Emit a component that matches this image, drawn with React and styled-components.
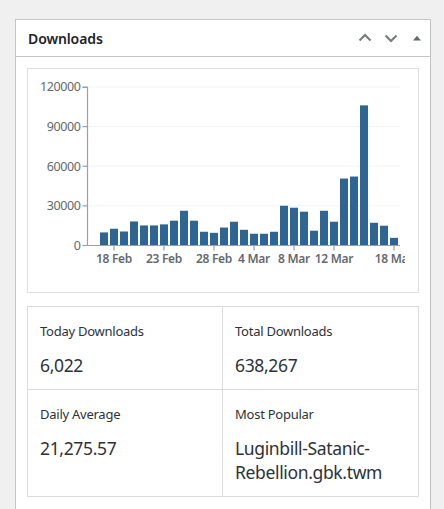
import React from "react";
import styled, { createGlobalStyle } from "styled-components";

const Global = createGlobalStyle`
  html, body { margin: 0; padding: 0; background: #f0f0f1; }
  body { font-family: "Noto Sans", "Open Sans", sans-serif; color: #1d2327; }
`;

const Page = styled.div`
  padding: 19px 13px 0 15px;
  height: 509px;
  box-sizing: border-box;
  overflow: hidden;
`;

const Panel = styled.section`
  background: #fff;
  border: 1px solid #c3c4c7;
  width: 416px;
  box-sizing: border-box;
  min-height: 520px;
`;

const Header = styled.header`
  display: flex;
  align-items: center;
  justify-content: space-between;
  height: 36px;
  padding: 0 0 0 12px;
  border-bottom: 1px solid #c3c4c7;
`;

const Title = styled.h2`
  margin: 0;
  font-size: 14px;
  font-weight: 600;
  color: #1d2327;
  letter-spacing: -0.1px;
`;

const Controls = styled.div`
  display: flex;
  align-items: center;
`;

const IconButton = styled.button`
  width: 26px;
  height: 36px;
  border: 0;
  background: none;
  padding: 0;
  display: flex;
  align-items: center;
  justify-content: center;
  color: ${(p) => p.$color || "#787c82"};
`;

const Body = styled.div`
  padding: 11px 11px 12px 11px;
  display: flex;
  flex-direction: column;
  gap: 13px;
`;

const ChartBox = styled.div`
  border: 1px solid #e0e0e0;
  height: 225px;
  box-sizing: border-box;
`;

const Stats = styled.div`
  display: grid;
  grid-template-columns: 195px 1fr;
  border: 1px solid #dcdcde;
`;

const Cell = styled.div`
  padding: 14px 13px 12px 12px;
  border-right: ${(p) => (p.$right ? "0" : "1px solid #dcdcde")};
  border-bottom: ${(p) => (p.$last ? "0" : "1px solid #dcdcde")};
`;

const Label = styled.div`
  font-size: 13px;
  line-height: 20px;
  color: #2c3338;
  letter-spacing: -0.25px;
`;

const Value = styled.div`
  margin-top: 12px;
  font-size: 17.5px;
  line-height: 24px;
  color: #2c3338;
  letter-spacing: -0.35px;
`;

const data = [
  9900, 12700, 10600, 18200, 15200, 15200, 16000, 18800, 26300, 18800,
  10400, 9600, 13600, 18000, 11900, 8900, 8900, 10400, 30100, 28600,
  25600, 11200, 26300, 18000, 50700, 52200, 106100, 17200, 15000, 5800,
];

const xTicks = [
  { i: 1, t: "18 Feb" },
  { i: 6, t: "23 Feb" },
  { i: 11, t: "28 Feb" },
  { i: 15, t: "4 Mar" },
  { i: 19, t: "8 Mar" },
  { i: 23, t: "12 Mar" },
  { i: 29, t: "18 Mar" },
];

function Chart() {
  const ax = 59.5;
  const base = 176.5;
  const top = 18;
  const scale = (base - top) / 120000;
  const yTicks = [0, 30000, 60000, 90000, 120000];
  const x0 = 72;
  return (
    <svg width="377" height="223" style={{ display: "block", overflow: "hidden" }}>
      {yTicks.slice(1).map((v) => (
        <line key={v} x1={ax} x2={372} y1={base - v * scale} y2={base - v * scale} stroke="#f3f3f3" strokeWidth="1" />
      ))}
      {data.map((v, i) => {
        const h = v * scale;
        return <rect key={i} x={x0 + i * 10} y={base - h} width="8" height={h} fill="#2e6592" />;
      })}
      <path d={`M${ax - 5},${top + 0.5}H${ax}V${base}H372`} fill="none" stroke="#a0a0a0" strokeWidth="1.2" />
      {yTicks.map((v) => (
        <g key={v}>
          <line x1={ax - 5} x2={ax} y1={base - v * scale} y2={base - v * scale} stroke="#a0a0a0" strokeWidth="1.2" />
          <text x={ax - 7} y={base - v * scale} dy="0.35em" textAnchor="end" fontSize="12.5" fill="#646970" fontFamily="'Noto Sans', sans-serif" letterSpacing="-0.4">
            {v}
          </text>
        </g>
      ))}
      {xTicks.map(({ i, t }) => {
        const cx = x0 + i * 10 + 4;
        return (
          <g key={t}>
            <line x1={cx} x2={cx} y1={base} y2={base + 5} stroke="#a0a0a0" strokeWidth="1.2" />
            <text x={cx} y={base + 13} dy="0.35em" textAnchor="middle" fontSize="12" fontWeight="600" fill="#646970" fontFamily="'Noto Sans', sans-serif" letterSpacing="-0.3">
              {t}
            </text>
          </g>
        );
      })}
    </svg>
  );
}

const stats = [
  { label: "Today Downloads", value: "6,022" },
  { label: "Total Downloads", value: "638,267" },
  { label: "Daily Average", value: "21,275.57" },
  { label: "Most Popular", value: "Luginbill-Satanic-Rebellion.gbk.twm" },
];

export default function App() {
  return (
    <>
      <Global />
      <Page>
        <Panel>
          <Header>
            <Title>Downloads</Title>
            <Controls>
              <IconButton aria-label="Move up">
                <svg width="14" height="10" viewBox="0 0 14 10">
                  <path d="M1.5 7.5 L7 2 L12.5 7.5" fill="none" stroke="currentColor" strokeWidth="2.2" />
                </svg>
              </IconButton>
              <IconButton aria-label="Move down">
                <svg width="14" height="10" viewBox="0 0 14 10">
                  <path d="M1.5 2.5 L7 8 L12.5 2.5" fill="none" stroke="currentColor" strokeWidth="2.2" />
                </svg>
              </IconButton>
              <IconButton aria-label="Toggle" $color="#646970">
                <svg width="10" height="6" viewBox="0 0 10 6">
                  <path d="M1 5.5 L5 0.8 L9 5.5 Z" fill="currentColor" />
                </svg>
              </IconButton>
            </Controls>
          </Header>
          <Body>
            <ChartBox>
              <Chart />
            </ChartBox>
            <Stats>
              {stats.map((s, i) => (
                <Cell key={s.label} $right={i % 2 === 1} $last={i >= 2}>
                  <Label>{s.label}</Label>
                  <Value>
                    {s.label === "Most Popular" ? (
                      <>
                        Luginbill-Satanic-
                        <br />
                        Rebellion.gbk.twm
                      </>
                    ) : (
                      s.value
                    )}
                  </Value>
                </Cell>
              ))}
            </Stats>
          </Body>
        </Panel>
      </Page>
    </>
  );
}
